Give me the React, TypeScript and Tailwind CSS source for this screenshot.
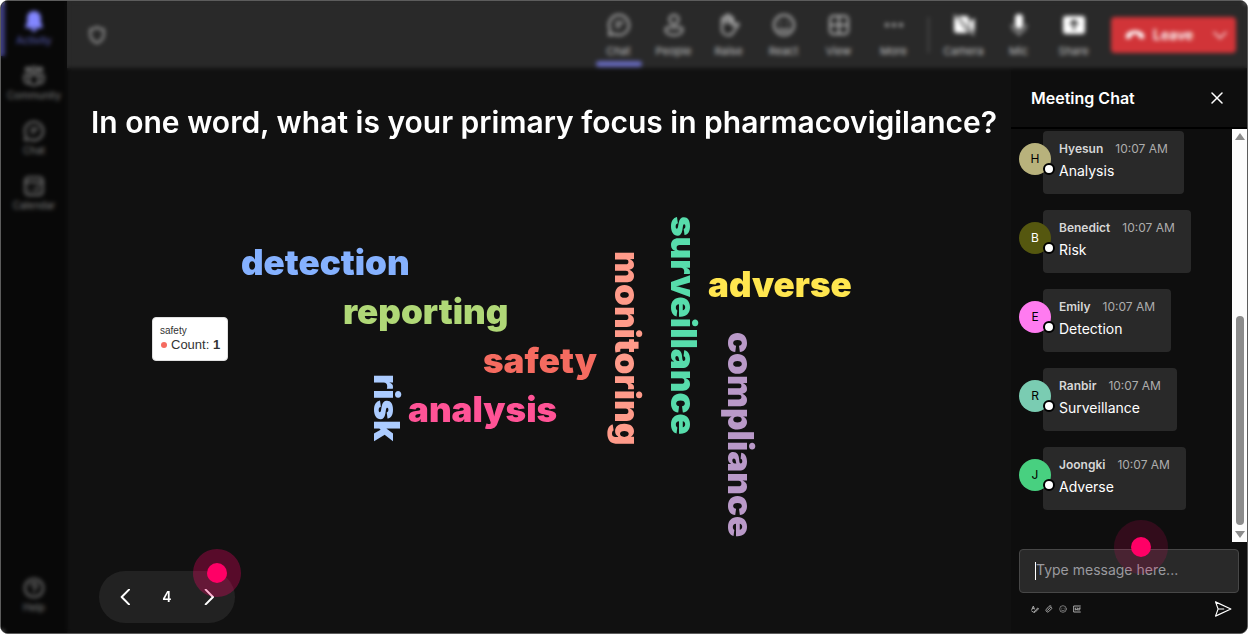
import React from 'react';
import clsx from 'clsx';

type Icon = React.FC<{ className?: string }>;

interface Action {
  label: string;
  icon: Icon;
  active?: boolean;
  bright?: boolean;
}

const stroke = {
  viewBox: '0 0 24 24',
  fill: 'none',
  stroke: 'currentColor',
  strokeWidth: 2,
  strokeLinecap: 'round' as const,
  strokeLinejoin: 'round' as const,
  'aria-hidden': true,
};

const BellIcon: Icon = ({ className }) => (
  <svg viewBox="0 0 24 24" fill="currentColor" className={className} aria-hidden>
    <path d="M12 1c-4.500 0-7.500 3.400-7.500 7.800v4.700L2.500 18c-.3.800.2 1.500 1 1.500h17c.8 0 1.300-.7 1-1.500l-2-4.500V8.800C19.500 4.400 16.500 1 12 1z" />
    <path d="M8.500 20.500h7a3.500 3 0 0 1-7 0z" />
  </svg>
);

const CommunityIcon: Icon = ({ className }) => (
  <svg {...stroke} className={className}>
    <circle cx="12" cy="5" r="3" />
    <circle cx="5" cy="5" r="2" />
    <circle cx="19" cy="5" r="2" />
    <path d="M7 11h10v6a5 5 0 0 1-10 0z" />
    <path d="M7 11H1.500v5a4.500 4.500 0 0 0 5.500 4M17 11h5.500v5a4.500 4.500 0 0 1-5.500 4" />
  </svg>
);

const ChatIcon: Icon = ({ className }) => (
  <svg {...stroke} className={className}>
    <path d="M12 2a10 10 0 1 1-4.600 18.900L2 22l1.200-5.200A10 10 0 0 1 12 2z" />
    <path d="M9 9.500h7M9 13.500h4" />
  </svg>
);

const CalendarIcon: Icon = ({ className }) => (
  <svg {...stroke} className={className}>
    <rect x="2.500" y="2.500" width="19" height="19" rx="3.500" />
    <path d="M3 8h18M12 16h5M16 12h1M7 16h.5" />
  </svg>
);

const HelpIcon: Icon = ({ className }) => (
  <svg {...stroke} className={className}>
    <circle cx="12" cy="12" r="10" />
    <path d="M9 9.500a3 3 0 1 1 4.500 2.600c-1 .6-1.500 1.100-1.500 2.200M12 17.500v.1" />
  </svg>
);

const ShieldIcon: Icon = ({ className }) => (
  <svg {...stroke} className={className}>
    <path d="M12 2.500c2.500 2 5 2.700 8 2.800v6.200c0 5-3 8.200-8 10.200-5-2-8-5.200-8-10.200V5.300c3-.1 5.500-.8 8-2.800z" />
  </svg>
);

const PersonIcon: Icon = ({ className }) => (
  <svg {...stroke} className={className}>
    <circle cx="12" cy="6.500" r="4.500" />
    <path d="M5.500 14.500h13a2 2 0 0 1 2 2c0 3.500-3.500 5.500-8.500 5.500s-8.500-2-8.500-5.500a2 2 0 0 1 2-2z" />
  </svg>
);

const HandIcon: Icon = ({ className }) => (
  <svg {...stroke} className={className}>
    <path d="M5 12V5.500l3-2 3-2 3 2 2 2V13l3.500-2.500c1.200-.8 2.500.5 1.800 1.700L16 19.500c-1 1.800-2.500 2.700-4.500 2.700-4 0-6.500-2.300-6.500-5.700z" />
    <path d="M8 4v6M11 2.500V10M14 4v6" />
  </svg>
);

const SmileIcon: Icon = ({ className }) => (
  <svg {...stroke} className={className}>
    <circle cx="12" cy="12" r="10" />
    <path d="M7.500 15.500c2.500 2.600 6.500 2.600 9 0M8.500 9.500v.2M15.500 9.500v.2" />
  </svg>
);

const GridIcon: Icon = ({ className }) => (
  <svg {...stroke} className={className}>
    <rect x="3" y="3" width="18" height="18" rx="3.500" />
    <path d="M12 3v18M3 12h18" />
  </svg>
);

const DotsIcon: Icon = ({ className }) => (
  <svg viewBox="0 0 24 24" fill="currentColor" className={className} aria-hidden>
    <circle cx="5" cy="12" r="2" />
    <circle cx="12" cy="12" r="2" />
    <circle cx="19" cy="12" r="2" />
  </svg>
);

const CameraOffIcon: Icon = ({ className }) => (
  <svg viewBox="0 0 24 24" fill="currentColor" className={className} aria-hidden>
    <path d="M6 3h8a3 3 0 0 1 3 3v9zM3.500 4.500 16.500 20H5a3 3 0 0 1-3-3V6z" />
    <path d="M18 8.500 22.500 5v14L18 15.500z" />
    <path d="m2 2 20 20" stroke="currentColor" strokeWidth="1.500" />
  </svg>
);

const MicIcon: Icon = ({ className }) => (
  <svg viewBox="0 0 24 24" fill="currentColor" className={className} aria-hidden>
    <rect x="8" y="1" width="8" height="15" rx="4" />
    <path d="M5 11v1.500a7 7 0 0 0 14 0V11M12 19.500V23" fill="none" stroke="currentColor" strokeWidth="1.500" opacity="0.7" />
  </svg>
);

const ShareIcon: Icon = ({ className }) => (
  <svg viewBox="0 0 24 24" fill="currentColor" className={className} aria-hidden>
    <rect x="1" y="3" width="22" height="18" rx="3" />
    <path d="M12 17V8M8 11.500 12 7.500l4 4" fill="none" stroke="#292929" strokeWidth="2" />
  </svg>
);

const HangUpIcon: Icon = ({ className }) => (
  <svg viewBox="0 0 24 24" fill="currentColor" className={className} aria-hidden>
    <path d="M12 6.500c5 0 9.500 2 10.700 5.300.5 1.400.4 3-.2 4.200-.3.600-1 .9-1.600.7l-3.600-1c-.7-.2-1.100-.8-1.100-1.500l-.1-2.500c-2.600-.8-5.600-.8-8.200 0l-.1 2.500c0 .7-.4 1.300-1.100 1.500l-3.600 1c-.6.2-1.300-.1-1.600-.7-.6-1.200-.7-2.800-.2-4.200C2.500 8.500 7 6.500 12 6.500z" />
  </svg>
);

const FormatIcon: Icon = ({ className }) => (
  <svg {...stroke} strokeWidth={3} className={className}>
    <path d="M2 15 7 3l3 9M4 10h5M9 21 20 9l3 2-10 10zM3 19l4 2" />
  </svg>
);

const ClipIcon: Icon = ({ className }) => (
  <svg {...stroke} strokeWidth={3} className={className}>
    <path d="m8 16 8-9a3 3 0 0 1 4 4l-9 9a5 5 0 0 1-7-7l8-9a5 5 0 0 1 6-1" />
  </svg>
);

const GifIcon: Icon = ({ className }) => (
  <svg {...stroke} strokeWidth={3} className={className}>
    <path d="M22 3H2v18h20M9 9H7v6h3v-2M14 9v6M18 16V9h4M18 12h3" />
  </svg>
);

const SendIcon: Icon = ({ className }) => (
  <svg {...stroke} strokeWidth={1.5} className={className}>
    <path d="M2 2.500 22.500 12 2 21.500 5.500 12zM5.500 12H13" />
  </svg>
);

const navItems: Action[] = [
  { label: 'Activity', icon: BellIcon, active: true },
  { label: 'Community', icon: CommunityIcon },
  { label: 'Chat', icon: ChatIcon },
  { label: 'Calendar', icon: CalendarIcon },
];

const meetingActions: Action[] = [
  { label: 'Chat', icon: ChatIcon, active: true },
  { label: 'People', icon: PersonIcon },
  { label: 'Raise', icon: HandIcon },
  { label: 'React', icon: SmileIcon },
  { label: 'View', icon: GridIcon },
  { label: 'More', icon: DotsIcon },
];

const deviceActions: Action[] = [
  { label: 'Camera', icon: CameraOffIcon, bright: true },
  { label: 'Mic', icon: MicIcon, bright: true },
  { label: 'Share', icon: ShareIcon, bright: true },
];

const messages = [
  { name: 'Hyesun', text: 'Analysis', avatar: 'bg-[#b8b27c] text-black' },
  { name: 'Benedict', text: 'Risk', avatar: 'bg-[#55570f] text-white' },
  { name: 'Emily', text: 'Detection', avatar: 'bg-[#ff7bf0] text-black' },
  { name: 'Ranbir', text: 'Surveillance', avatar: 'bg-[#7accb2] text-black' },
  { name: 'Joongki', text: 'Adverse', avatar: 'bg-[#48d080] text-black' },
];

// x / y are the top left corner of the word on the cloud canvas
const words = [
  { text: 'detection', x: 174, y: 102, color: 'text-[#85b1ff]' },
  { text: 'reporting', x: 276, y: 151, color: 'text-[#b0d877]' },
  { text: 'safety', x: 416, y: 200, color: 'text-[#f56b60]' },
  { text: 'analysis', x: 341, y: 249, color: 'text-[#ff5396]' },
  { text: 'adverse', x: 641, y: 124, color: 'text-[#ffe64f]' },
  { text: 'risk', x: 300, y: 234, color: 'text-[#acccff]', vertical: true },
  { text: 'monitoring', x: 541, y: 111, color: 'text-[#ff9b8a]', vertical: true },
  { text: 'surveillance', x: 597, y: 76, color: 'text-[#57dcab]', vertical: true },
  { text: 'compliance', x: 654, y: 192, color: 'text-[#b999c8]', vertical: true },
];

const Hotspot: React.FC<{ className: string; dim?: boolean }> = ({ className, dim }) => (
  <span
    className={clsx(
      'pointer-events-none absolute z-20 flex items-center justify-center rounded-full',
      dim ? 'size-[54px] bg-[#ff0066]/15' : 'size-12 bg-[#ff0066]/30',
      className,
    )}
  >
    <span className="size-5 rounded-full bg-[#ff0066]" />
  </span>
);

const NavButton: React.FC<{ item: Action }> = ({ item: { label, icon: Glyph, active } }) => (
  <button
    className={clsx(
      'flex h-[55px] w-full flex-col items-center border-l-4 pt-2 pr-1 text-[10px] leading-3',
      active ? 'border-[#3d3d80] text-[#5c60b8]' : 'border-transparent text-[#808080]',
    )}
  >
    <Glyph className={clsx('mb-px size-6 p-px', active && 'text-[#8286ff]')} />
    {label}
  </button>
);

const ToolbarButton: React.FC<{ item: Action }> = ({ item: { label, icon: Glyph, active, bright } }) => (
  <button className="flex h-full w-[55px] flex-col items-center pt-3 text-[11px] leading-4 text-[#c0c0c0]">
    <Glyph className={clsx('mb-1.5 size-6', bright ? 'text-white' : 'text-[#b4b4b4]')} />
    <span>{label}</span>
    {active && <span className="mt-0.5 h-1.5 w-[46px] rounded-full bg-[#6467b8]" />}
  </button>
);

const App: React.FC = () => {
  return (
    <div className="flex min-h-screen bg-white font-['Inter',sans-serif] text-white">
      <div className="flex w-full overflow-hidden rounded-lg border border-[#5c5c5c] bg-[#111111]">
        {/* Left rail */}
        <nav className="relative flex w-[66px] shrink-0 flex-col bg-[#080808]">
          {navItems.map((item) => (
            <NavButton key={item.label} item={item} />
          ))}
          <div className="mt-auto pb-2.5">
            <NavButton item={{ label: 'Help', icon: HelpIcon }} />
          </div>
          <div className="pointer-events-none absolute inset-y-0 left-0 -right-1 backdrop-blur-[2px]" />
        </nav>

        <div className="flex min-w-0 flex-1 flex-col">
          {/* Meeting toolbar */}
          <header className="relative flex h-[67px] items-center bg-[#292929] pr-[11px] pl-5">
            <ShieldIcon className="size-5 text-[#b4b4b4]" />
            <div className="ml-auto flex h-full items-center">
              {meetingActions.map((item) => (
                <ToolbarButton key={item.label} item={item} />
              ))}
              <span className="mx-[7px] h-9 w-px bg-[#606060]" />
              {deviceActions.map((item) => (
                <ToolbarButton key={item.label} item={item} />
              ))}
              <button className="ml-2.5 flex h-9 w-[125px] items-center rounded bg-[#d13438] pl-3.5 text-sm font-semibold">
                <HangUpIcon className="mr-2 size-5" />
                Leave
                <svg {...stroke} className="ml-auto mr-2 size-4">
                  <path d="m3 8 9 9 9-9" />
                </svg>
              </button>
            </div>
            <div className="pointer-events-none absolute inset-x-0 top-0 -bottom-1 backdrop-blur-[2px]" />
          </header>

          <div className="flex min-h-0 flex-1">
            <main className="relative flex min-w-0 flex-1 flex-col">
              <h1 className="px-6 pt-9 text-[30px] leading-9 font-semibold whitespace-nowrap">
                In one word, what is your primary focus in pharmacovigilance?
              </h1>

              {/* Word cloud */}
              <div className="relative flex-1">
                {words.map((w) => (
                  <span
                    key={w.text}
                    className={clsx(
                      'absolute text-[35px] leading-10 font-black',
                      w.color,
                      w.vertical && '[writing-mode:vertical-rl]',
                    )}
                    style={{ left: w.x, top: w.y }}
                  >
                    {w.text}
                  </span>
                ))}
                <div
                  role="tooltip"
                  className="absolute top-[177px] left-[85px] rounded-sm border border-[#e0e0e0] bg-white px-[7px] py-[7px] font-['Liberation_Sans',Arial,sans-serif] text-[#333333]"
                >
                  <div className="text-[10px] leading-3">safety</div>
                  <div className="flex items-center text-[13px] leading-4">
                    <span className="mr-1 ml-px size-1.5 rounded-full bg-[#f56b60]" />
                    Count:&nbsp;<b>1</b>
                  </div>
                </div>
              </div>

              {/* Slide pager */}
              <div className="relative mb-2.5 ml-8 flex h-[52px] w-[136px] items-center justify-between rounded-full bg-[#222222] px-[18px]">
                <button aria-label="Previous question">
                  <svg {...stroke} strokeWidth={3} className="size-4">
                    <path d="m18 1-11 11 11 11" />
                  </svg>
                </button>
                <span className="text-sm font-semibold">4</span>
                <button aria-label="Next question">
                  <svg {...stroke} strokeWidth={3} className="size-4">
                    <path d="m7 1 11 11-11 11" />
                  </svg>
                </button>
                <Hotspot className="-top-[22px] -right-1.5" />
              </div>
            </main>

            {/* Chat panel */}
            <aside className="flex w-[236px] shrink-0 flex-col bg-[#0e0e0e]">
              <div className="flex h-[61px] items-center justify-between border-b-2 border-black pr-6 pl-5">
                <h2 className="text-base font-semibold">Meeting Chat</h2>
                <button aria-label="Close chat">
                  <svg {...stroke} strokeWidth={3} className="size-3">
                    <path d="m2 2 20 20M22 2 2 22" />
                  </svg>
                </button>
              </div>

              <div className="flex flex-1">
                <ul className="flex min-w-0 flex-1 flex-col gap-4 pt-0.5 pl-2">
                  {messages.map((m) => (
                    <li key={m.name} className="flex items-start">
                      <div
                        className={clsx(
                          'relative z-10 mt-3 -mr-2 flex size-8 shrink-0 items-center justify-center rounded-full text-xs',
                          m.avatar,
                        )}
                      >
                        {m.name[0]}
                        <span className="absolute -right-1 bottom-0 size-3 rounded-full border-2 border-black bg-white" />
                      </div>
                      <div className="h-[63px] rounded bg-[#292929] px-4 pt-2">
                        <div className="flex gap-3 text-xs leading-5">
                          <span className="font-semibold text-[#d6d6d6]">{m.name}</span>
                          <time className="text-[#adadad]">10:07 AM</time>
                        </div>
                        <p className="text-sm leading-6">{m.text}</p>
                      </div>
                    </li>
                  ))}
                </ul>
                {/* Scrollbar */}
                <div className="flex w-[15px] flex-col items-center justify-between bg-[#fcfcfc] py-1">
                  <span className="border-x-[5px] border-b-[7px] border-x-transparent border-b-[#8b8b8b]" />
                  <span className="mt-auto mb-1.5 h-[209px] w-2 rounded-full bg-[#8b8b8b]" />
                  <span className="border-x-[5px] border-t-[7px] border-x-transparent border-t-[#8b8b8b]" />
                </div>
              </div>

              <div className="relative px-2 pt-[7px]">
                <input
                  aria-label="Message"
                  placeholder="Type message here..."
                  className="h-11 w-full rounded border border-[#474747] bg-[#292929] px-4 pb-1 text-sm outline-none placeholder:text-[#9a9a9f]"
                />
                <span className="absolute top-5 left-6 h-[18px] w-px bg-white" />
                <Hotspot dim className="-top-[22px] left-[103px]" />
              </div>
              <div className="flex h-10 items-center gap-1.5 pr-[15px] pb-2 pl-5 text-[#a8a8a8]">
                <button aria-label="Format">
                  <FormatIcon className="size-2" />
                </button>
                <button aria-label="Attach">
                  <ClipIcon className="size-2" />
                </button>
                <button aria-label="Emoji">
                  <SmileIcon className="size-2" />
                </button>
                <button aria-label="GIF">
                  <GifIcon className="size-2" />
                </button>
                <button aria-label="Send" className="ml-auto text-white">
                  <SendIcon className="size-[18px]" />
                </button>
              </div>
            </aside>
          </div>
        </div>
      </div>
    </div>
  );
};

export default App;
